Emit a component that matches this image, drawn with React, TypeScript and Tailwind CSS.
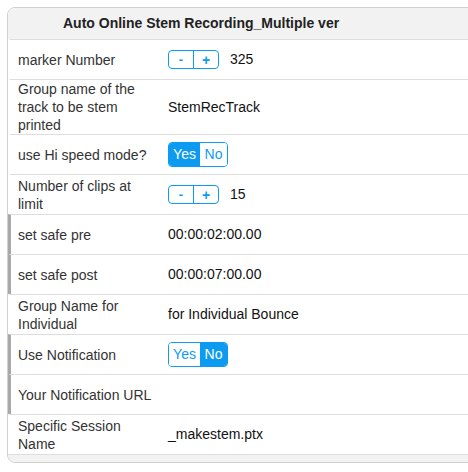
import React from 'react';

const BLUE = '#0d9bf2';

type Row = {
  label: string;
  marked?: boolean;
  value: React.ReactNode;
};

function Stepper({ value }: { value: string }) {
  return (
    <div className="flex items-center gap-[11px]">
      <div className="flex h-[19px] rounded-[4px] border border-[#0d9bf2] overflow-hidden">
        <button className="w-[25px] h-full flex items-center justify-center text-[13px] font-bold text-[#0d9bf2] leading-none border-r border-[#0d9bf2]">
          -
        </button>
        <button className="w-[24px] h-full flex items-center justify-center text-[14px] font-bold text-[#0d9bf2] leading-none">
          +
        </button>
      </div>
      <span>{value}</span>
    </div>
  );
}

function Toggle({ on }: { on: boolean }) {
  return (
    <div className="flex h-[25px] rounded-[4px] border border-[#0d9bf2] overflow-hidden text-[14px]">
      <span
        className={`w-[31px] flex items-center justify-center ${
          on ? 'bg-[#0d9bf2] text-white' : 'bg-white text-[#0d9bf2]'
        }`}
      >
        Yes
      </span>
      <span
        className={`w-[27px] flex items-center justify-center ${
          on ? 'bg-white text-[#0d9bf2]' : 'bg-[#0d9bf2] text-white'
        }`}
      >
        No
      </span>
    </div>
  );
}

const rows: Row[] = [
  { label: 'marker Number', value: <Stepper value="325" /> },
  { label: 'Group name of the track to be stem printed', value: 'StemRecTrack' },
  { label: 'use Hi speed mode?', value: <Toggle on /> },
  { label: 'Number of clips at limit', value: <Stepper value="15" /> },
  { label: 'set safe pre', marked: true, value: '00:00:02:00.00' },
  { label: 'set safe post', marked: true, value: '00:00:07:00.00' },
  { label: 'Group Name for Individual', value: 'for Individual Bounce' },
  { label: 'Use Notification', marked: true, value: <Toggle on={false} /> },
  { label: 'Your Notification URL', marked: true, value: '' },
  { label: 'Specific Session Name', value: '_makestem.ptx' },
];

export default function App() {
  return (
    <div
      className="w-[468px] h-[472px] overflow-hidden bg-white pt-[7px] pl-[7px]"
      style={{ fontFamily: '"Liberation Sans", Arial, sans-serif' }}
    >
      <div className="w-[490px] border border-[#cfcfcf] rounded-[8px] overflow-hidden bg-white">
        {/* Header */}
        <div className="h-[31px] bg-[#f2f2f2] flex items-center pl-[55px] text-[14px] font-bold text-[#222]">
          Auto Online Stem Recording_Multiple ver
        </div>

        {rows.map((r) => (
          <div
            key={r.label}
            className={`flex min-h-[40px] border-t border-[#dedede] border-l-[3px] ${
              r.marked ? 'border-l-[#a8a8a8]' : 'border-l-white'
            }`}
          >
            <div className="w-[157px] shrink-0 pl-[7px] pr-[12px] flex items-center text-[14px] leading-[18px] text-[#333]">
              {r.label}
            </div>
            <div className="flex-1 flex items-center text-[14px] text-[#111]">{r.value}</div>
          </div>
        ))}

        {/* Footer */}
        <div className="h-[8px] bg-[#f2f2f2] border-t border-[#dedede]" />
      </div>
    </div>
  );
}
